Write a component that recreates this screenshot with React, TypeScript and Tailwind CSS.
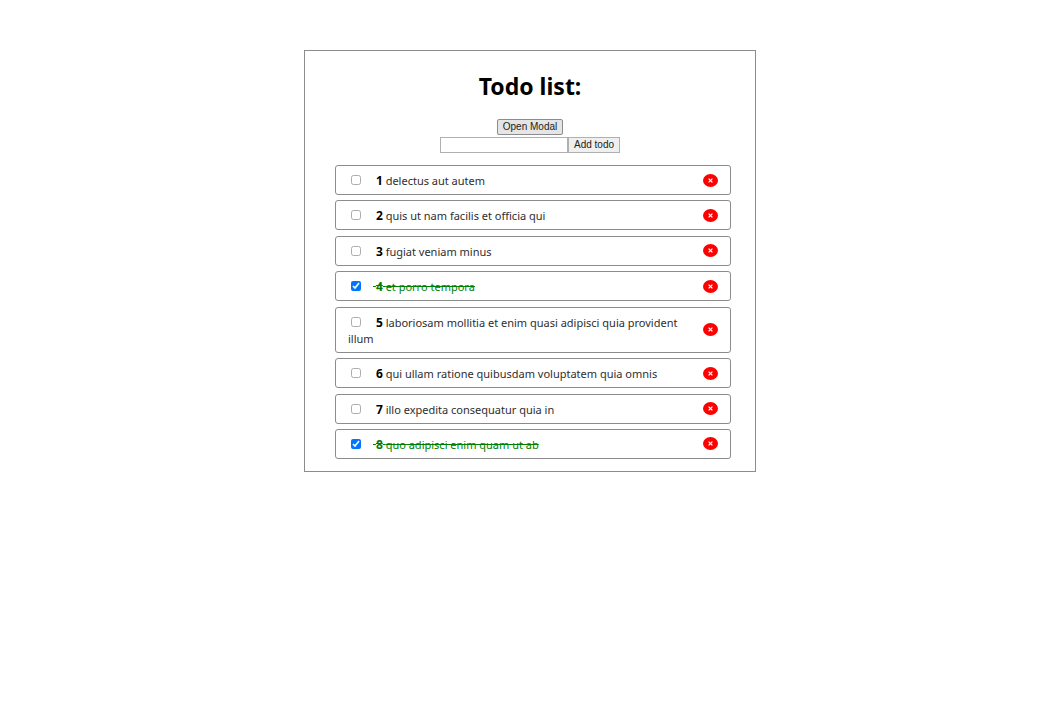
import { useState } from "react";

type Todo = { id: number; title: string; completed: boolean };

const initialTodos: Todo[] = [
  { id: 1, title: "delectus aut autem", completed: false },
  { id: 2, title: "quis ut nam facilis et officia qui", completed: false },
  { id: 3, title: "fugiat veniam minus", completed: false },
  { id: 4, title: "et porro tempora", completed: true },
  { id: 5, title: "laboriosam mollitia et enim quasi adipisci quia provident illum", completed: false },
  { id: 6, title: "qui ullam ratione quibusdam voluptatem quia omnis", completed: false },
  { id: 7, title: "illo expedita consequatur quia in", completed: false },
  { id: 8, title: "quo adipisci enim quam ut ab", completed: true },
];

type TodoItemProps = { todo: Todo; onToggle: () => void; onRemove: () => void };

function TodoItem({ todo, onToggle, onRemove }: TodoItemProps) {
  const inputId = `todo-${todo.id}`;
  return (
    <li className="flex items-center justify-between gap-3 rounded-[3px] border border-[#8c8c8c] px-3">
      <div className="pt-[7px] pb-[5px] text-[11px] leading-4 text-[#2e2e2e]">
        <input
          id={inputId}
          type="checkbox"
          checked={todo.completed}
          onChange={onToggle}
          className="mr-3 ml-[3px] size-[10px] align-[0px] opacity-60 checked:opacity-100"
        />
        <label htmlFor={inputId} className={todo.completed ? "text-[#008000] line-through" : ""}>
          {"\u00a0"}
          <strong className={todo.completed ? "text-xs leading-4 font-bold" : "text-xs leading-4 font-bold text-black"}>
            {todo.id}
          </strong>{" "}
          {todo.title}
        </label>
      </div>
      <button
        type="button"
        aria-label={`Delete todo ${todo.id}`}
        onClick={onRemove}
        className="flex h-[13px] w-[15px] shrink-0 items-center justify-center rounded-[50%] bg-[#ff0000] text-white"
      >
        <svg viewBox="0 0 5 5" className="size-[5px]" fill="none" stroke="currentColor" strokeWidth="1.2">
          <path d="M.6 .6 4.4 4.4M4.4 .6 .6 4.4" />
        </svg>
      </button>
    </li>
  );
}

export default function App() {
  const [todos, setTodos] = useState(initialTodos);
  const [title, setTitle] = useState("");

  const addTodo = () => {
    if (!title.trim()) return;
    setTodos([...todos, { id: Date.now(), title, completed: false }]);
    setTitle("");
  };
  const toggle = (id: number) =>
    setTodos(todos.map((t) => (t.id === id ? { ...t, completed: !t.completed } : t)));
  const remove = (id: number) => setTodos(todos.filter((t) => t.id !== id));

  return (
    <div className="min-h-screen bg-white pt-[50px] pl-[2px] font-['Noto_Sans',sans-serif] text-black">
      <main className="mx-auto flex w-full max-w-[452px] flex-col items-center border border-[#8c8c8c] pt-[19px] pr-6 pb-3 pl-[30px]">
        <h1 className="mr-1.5 text-[23px] leading-8 font-bold">Todo list:</h1>
        <button
          type="button"
          className="mt-[17px] mr-1.5 h-4 rounded-[2px] border border-[#8c8c8c] bg-[#e5e5e5] px-[5px] font-['Liberation_Sans',sans-serif] text-[10px] leading-[14px] text-[#222]"
        >
          Open Modal
        </button>
        <form
          className="mt-0.5 mr-1.5 flex"
          onSubmit={(e) => {
            e.preventDefault();
            addTodo();
          }}
        >
          <input
            type="text"
            aria-label="New todo"
            value={title}
            onChange={(e) => setTitle(e.target.value)}
            className="h-4 w-32 border border-[#b0b0b0] bg-white px-0.5 font-['Liberation_Sans',sans-serif] text-[10px] outline-none"
          />
          <button
            type="submit"
            className="h-4 border border-[#b0b0b0] bg-[#efefef] px-[5px] font-['Liberation_Sans',sans-serif] text-[10px] leading-[14px] text-[#222]"
          >
            Add todo
          </button>
        </form>
        <ul className="mt-3 flex min-h-[294px] w-full flex-col justify-between">
          {todos.map((todo) => (
            <TodoItem
              key={todo.id}
              todo={todo}
              onToggle={() => toggle(todo.id)}
              onRemove={() => remove(todo.id)}
            />
          ))}
        </ul>
      </main>
    </div>
  );
}
